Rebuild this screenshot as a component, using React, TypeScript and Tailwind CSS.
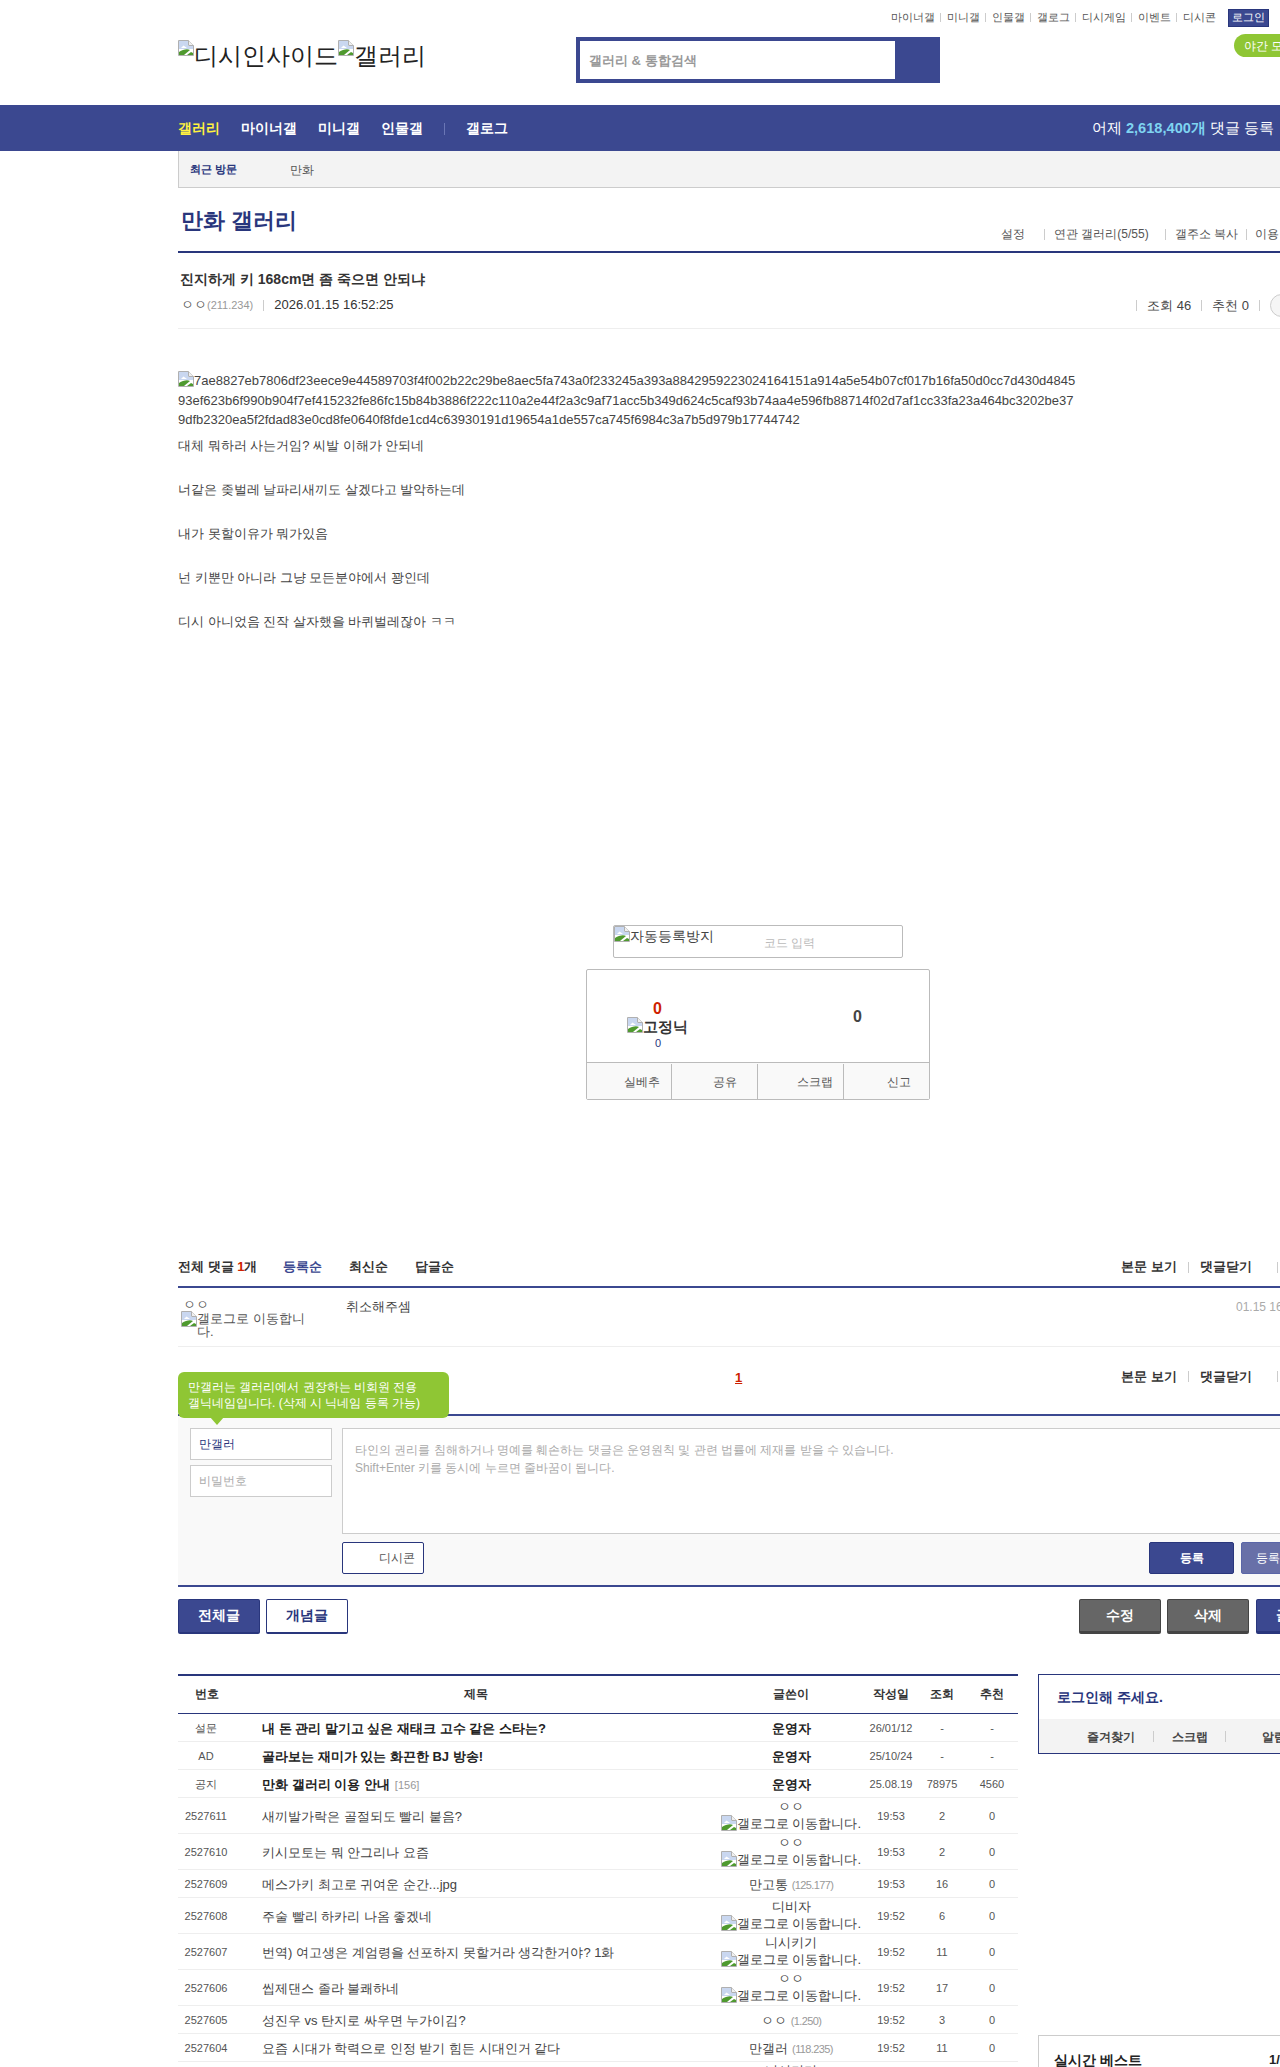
const FONT = "font-['Liberation_Sans',sans-serif]";

function BrokenImg() {
  return (
    <svg width="16" height="16" viewBox="0 0 16 16" className="inline-block align-top shrink-0">
      <path d="M0.5 0.5H10.5L15.5 5.5V15.5H0.5Z" fill="#fff" stroke="#b0b0b0" />
      <path d="M10.5 0.5V5.5H15.5" fill="#f0f0f0" stroke="#b0b0b0" />
      <path d="M1 1H10V5.5L11 6H15V9H1Z" fill="#c9d7f0" />
      <path d="M3 8l2.5-2.5L9 8Z" fill="#fff" />
      <path d="M1 15V12C5 9 10 8.5 12 10L6 15Z" fill="#4f9a2f" />
      <path d="M9 15l4-3 2 1v2Z" fill="#4f9a2f" />
    </svg>
  );
}

function Bar() {
  return <span className="inline-block h-[11px] w-px bg-[#ccc]" />;
}

const ROWS = [
  { num: "설문", title: "내 돈 관리 말기고 싶은 재태크 고수 같은 스타는?", bold: true, writer: "운영자", date: "26/01/12", view: "-", rec: "-", h: "h-[28px]" },
  { num: "AD", title: "골라보는 재미가 있는 화끈한 BJ 방송!", bold: true, writer: "운영자", date: "25/10/24", view: "-", rec: "-", h: "h-[28px]" },
  { num: "공지", title: "만화 갤러리 이용 안내", count: "[156]", bold: true, writer: "운영자", date: "25.08.19", view: "78975", rec: "4560", h: "h-[28px]" },
  { num: "2527611", title: "새끼발가락은 골절되도 빨리 붙음?", writer: "ㅇㅇ", icon: true, date: "19:53", view: "2", rec: "0", h: "h-[36px]" },
  { num: "2527610", title: "키시모토는 뭐 안그리나 요즘", writer: "ㅇㅇ", icon: true, date: "19:53", view: "2", rec: "0", h: "h-[36px]" },
  { num: "2527609", title: "메스가키 최고로 귀여운 순간...jpg", writer: "만고통", ip: "(125.177)", date: "19:53", view: "16", rec: "0", h: "h-[28px]" },
  { num: "2527608", title: "주술 빨리 하카리 나옴 좋겠네", writer: "디비자", icon: true, date: "19:52", view: "6", rec: "0", h: "h-[36px]" },
  { num: "2527607", title: "번역) 여고생은 계엄령을 선포하지 못할거라 생각한거야? 1화", writer: "니시키기", icon: true, date: "19:52", view: "11", rec: "0", h: "h-[36px]" },
  { num: "2527606", title: "씹제댄스 졸라 불쾌하네", writer: "ㅇㅇ", icon: true, date: "19:52", view: "17", rec: "0", h: "h-[36px]" },
  { num: "2527605", title: "성진우 vs 탄지로 싸우면 누가이김?", writer: "ㅇㅇ", ip: "(1.250)", date: "19:52", view: "3", rec: "0", h: "h-[28px]" },
  { num: "2527604", title: "요즘 시대가 학력으로 인정 받기 힘든 시대인거 같다", writer: "만갤러", ip: "(118.235)", date: "19:52", view: "11", rec: "0", h: "h-[28px]" },
  { num: "2527603", title: "", writer: "니시키기", icon: true, date: "", view: "", rec: "", h: "h-[36px]" },
];

const GRID = "grid grid-cols-[56px_484px_146px_54px_48px_52px] items-center text-center";

export default function App() {
  return (
    <div className={`${FONT} h-[2067px] w-[1280px] overflow-hidden bg-white text-[#333]`}>
      <header className="h-[105px] pl-[178px]">
        <div className="relative h-[105px] w-[1160px]">
          <div className="flex h-[37px] items-start justify-end pt-[9px] pr-[69px] text-[11px] text-[#555]">
            <div className="flex h-[18px] items-center gap-[5px] pb-[2px]">
              {["마이너갤", "미니갤", "인물갤", "갤로그", "디시게임", "이벤트", "디시콘"].map((t, i) => (
                <span key={t} className="flex items-center gap-[6px]">
                  {i > 0 && <span className="h-[9px] w-px bg-[#ccc]" />}
                  {t}
                </span>
              ))}
              <span className="ml-[7px] mb-[-2px] flex h-[18px] w-[41px] items-center justify-center border border-[#29367c] bg-[#3b4890] pb-[1px] text-white">로그인</span>
            </div>
          </div>
          <div className="flex items-start">
            <div className="flex w-[398px] items-start whitespace-nowrap pt-[3px] text-[24px] leading-[32px] text-[#222]">
              <BrokenImg />디시인사이드<BrokenImg />갤러리
            </div>
            <div className="flex h-[46px] w-[364px] border-4 border-[#3b4890] bg-[#3b4890]">
              <div className="flex w-[315px] items-center bg-white pl-[9px] pt-[1px] text-[13px] font-bold text-[#999]">갤러리 &amp; 통합검색</div>
            </div>
          </div>
          <div className="absolute left-[1056px] top-[34px] flex h-[23px] w-[104px] items-center rounded-l-full bg-[#8fc634] pl-[10px] pt-[1px] text-[12px] text-white">야간 모드</div>
        </div>
      </header>

      <nav className="flex h-[46px] bg-[#3b4890] pl-[178px] pt-[1px] text-white">
        <div className="flex w-[1102px] items-center justify-between">
          <div className="flex items-center text-[14px] font-bold">
            <span className="text-[#fff23f]">갤러리</span>
            <span className="ml-[21px]">마이너갤</span>
            <span className="ml-[21px]">미니갤</span>
            <span className="ml-[21px]">인물갤</span>
            <span className="ml-[21px] h-[12px] w-px bg-[#6a76b5]" />
            <span className="ml-[21px]">갤로그</span>
          </div>
          <div className="whitespace-nowrap pr-[6px] text-[14.6px]">
            어제 <b className="text-[#7fd4f0]">2,618,400개</b> 댓글 등록
          </div>
        </div>
      </nav>

      <div className="pl-[178px]">
        <div className="flex h-[37px] w-[1160px] items-center border-b border-l border-[#ccc] bg-[#f3f3f3] pl-[11px] pt-[1px] text-[12px]">
          <b className="w-[100px] text-[11px] text-[#29367c]">최근 방문</b>
          <span className="text-[#555]">만화</span>
        </div>

        <div className="flex h-[65px] w-[1160px] items-end justify-between border-b-2 border-[#29367c]">
          <h2 className="pb-[14px] pl-[3px] text-[22px] font-bold leading-[32px] text-[#29367c]">만화 갤러리</h2>
          <div className="flex items-center whitespace-nowrap pb-[8px] text-[12px] text-[#555]">
            <span>설정</span>
            <span className="ml-[19px] mr-[9px] flex items-center"><Bar /></span>
            <span>연관 갤러리(5/55)</span>
            <span className="ml-[16px] mr-[9px] flex items-center"><Bar /></span>
            <span>갤주소 복사</span>
            <span className="mx-[8px] flex items-center"><Bar /></span>
            <span className="w-[83px]">이용 안내</span>
          </div>
        </div>

        <div className="h-[76px] w-[1160px] border-b border-[#eee]">
          <h3 className="pl-[2px] pt-[16px] text-[14px] font-bold leading-[20px]">진지하게 키 168cm면 좀 죽으면 안되냐</h3>
          <div className="flex items-center justify-between">
            <div className="flex items-center pl-[3px] pt-[4px] text-[13px]">
              <span className="text-[13px] text-[#555]">ㅇㅇ</span>
              <span className="text-[11px] text-[#999]">(211.234)</span>
              <span className="mx-[10px] flex items-center"><Bar /></span>
              <span>2026.01.15 16:52:25</span>
            </div>
            <div className="flex items-center pr-[18px] pt-[5px] text-[13px] text-[#444]">
              <Bar />
              <span className="mx-[10px]">조회 46</span>
              <Bar />
              <span className="mx-[10px]">추천 0</span>
              <Bar />
              <span className="ml-[10px] h-[23px] w-[50px] rounded-full border border-[#ccc] bg-[#f5f5f5]" />
            </div>
          </div>
        </div>

        <div className="h-[596px] w-[900px] pt-[42px] text-[13px] leading-[19.5px] text-[#444]">
          <div className="break-all">
            <BrokenImg />7ae8827eb7806df23eece9e44589703f4f002b22c29be8aec5fa743a0f233245a393a8842959223024164151a914a5e54b07cf017b16fa50d0cc7d430d484593ef623b6f990b904f7ef415232fe86fc15b84b3886f222c110a2e44f2a3c9af71acc5b349d624c5caf93b74aa4e596fb88714f02d7af1cc33fa23a464bc3202be379dfb2320ea5f2fdad83e0cd8fe0640f8fde1cd4c63930191d19654a1de557ca745f6984c3a7b5d979b17744742
          </div>
          <div className="mt-[6px] flex flex-col gap-[24px] leading-[20px]">
            <p>대체 뭐하러 사는거임? 씨발 이해가 안되네</p>
            <p>너같은 좆벌레 날파리새끼도 살겠다고 발악하는데</p>
            <p>내가 못할이유가 뭐가있음</p>
            <p>넌 키뿐만 아니라 그냥 모든분야에서 꽝인데</p>
            <p>디시 아니었음 진작 살자했을 바퀴벌레잖아 ㅋㅋ</p>
          </div>
        </div>

        <div className="flex w-[1160px] flex-col items-center">
          <div className="relative h-[33px] w-[290px] rounded-[2px] border border-[#bbb]">
            <div className="flex items-start text-[14px] leading-[20px] text-[#444]"><BrokenImg />자동등록방지</div>
            <span className="absolute left-[150px] top-[8px] text-[12px] text-[#bbb]">코드 입력</span>
          </div>
          <div className="mt-[11px] w-[344px] rounded-[2px] border border-[#bbb]">
            <div className="relative h-[92px]">
              <b className="absolute left-[66px] top-[29px] text-[16px] leading-[20px] text-[#ce1f00]">0</b>
              <b className="absolute left-[40px] top-[47px] flex items-start text-[15px] leading-[20px]"><BrokenImg />고정닉</b>
              <span className="absolute left-[68px] top-[65px] text-[11px] text-[#29367c]">0</span>
              <b className="absolute left-[266px] top-[37px] text-[16px] leading-[20px] text-[#444]">0</b>
            </div>
            <div className="grid h-[37px] grid-cols-[84px_86px_86px_86px] border-t border-[#bbb] bg-[#f9f9f9] pt-[1px] text-[12px] text-[#555]">
              <span className="flex items-center justify-end pr-[11px]">실베추</span>
              <span className="flex items-center justify-end border-l border-[#bbb] pr-[20px]">공유</span>
              <span className="flex items-center justify-end border-l border-[#bbb] pr-[10px]">스크랩</span>
              <span className="flex items-center justify-end border-l border-[#bbb] pr-[18px]">신고</span>
            </div>
          </div>
        </div>

        <div className="mt-[157px] flex h-[31px] w-[1160px] items-start justify-between border-b-2 border-[#3b4890] text-[13px] font-bold leading-[20px]">
          <div className="flex">
            <span className="w-[105px]">전체 댓글 <span className="text-[#ce1f00]">1</span>개</span>
            <span className="w-[66px] text-[#3b4890]">등록순</span>
            <span className="w-[66px]">최신순</span>
            <span>답글순</span>
          </div>
          <div className="flex items-center pr-[60px]">
            <span>본문 보기</span>
            <span className="mx-[11px] flex items-center"><Bar /></span>
            <span>댓글닫기</span>
            <span className="ml-[25px] flex items-center"><Bar /></span>
          </div>
        </div>

        <div className="flex h-[59px] w-[1160px] border-b border-[#eee]">
          <div className="w-[168px] pl-[3px] pt-[10px] text-[13px] leading-[13px] text-[#555]">
            <div className="pl-[2px]">ㅇㅇ</div>
            <div className="relative w-[125px] pl-[16px] pt-[1px]">
              <span className="absolute left-0 top-0"><BrokenImg /></span>
              갤로그로 이동합니다.
            </div>
          </div>
          <div className="flex-1 pt-[10px] text-[13px] leading-[18px] text-[#444]">취소해주셈</div>
          <div className="w-[102px] pt-[10px] text-[12px] text-[#aaa]">01.15 16:52:25</div>
        </div>

        <div className="relative flex h-[69px] w-[1160px] items-center justify-end border-b-2 border-[#3b4890] pb-[8px] pr-[60px] text-[13px] font-bold">
          <span className="absolute left-[557px] top-[21px] text-[#ce1f00] underline">1</span>
          <div className="absolute left-0 top-[25px] w-[271px] rounded-[6px] bg-[#8fc634] px-[10px] py-[7px] text-[12px] font-normal leading-[16px] text-white">
            만갤러는 갤러리에서 권장하는 비회원 전용<br />갤닉네임입니다. (삭제 시 닉네임 등록 가능)
            <span className="absolute left-[32px] top-[45px] h-0 w-0 border-x-[7px] border-t-[8px] border-x-transparent border-t-[#8fc634]" />
          </div>
          <span>본문 보기</span>
          <span className="mx-[11px] flex items-center"><Bar /></span>
          <span>댓글닫기</span>
          <span className="ml-[25px] flex items-center"><Bar /></span>
        </div>

        <div className="h-[171px] w-[1160px] border-b-2 border-[#3b4890] bg-[#f9f9f9] pt-[12px]">
          <div className="flex">
            <div className="ml-[12px] flex w-[142px] flex-col gap-[5px] text-[12px]">
              <div className="flex h-[32px] items-center border border-[#ccc] bg-white pl-[8px] text-[#29367c]">만갤러</div>
              <div className="flex h-[32px] items-center border border-[#ccc] bg-white pl-[8px] text-[#aaa]">비밀번호</div>
            </div>
            <div className="ml-[10px] flex-1">
              <div className="h-[106px] border border-[#ccc] bg-white pl-[12px] pt-[12px] text-[12px] leading-[18px] text-[#aaa]">
                타인의 권리를 침해하거나 명예를 훼손하는 댓글은 운영원칙 및 관련 법률에 제재를 받을 수 있습니다.<br />
                Shift+Enter 키를 동시에 누르면 줄바꿈이 됩니다.
              </div>
              <div className="mt-[8px] flex items-start justify-between">
                <div className="flex h-[32px] w-[82px] items-center rounded-[2px] border border-[#29367c] bg-white pl-[36px] text-[12px] text-[#555]">디시콘</div>
                <div className="mr-[12px] flex gap-[7px] text-[12px] font-bold text-white">
                  <div className="flex h-[32px] w-[85px] items-center justify-center rounded-[2px] border border-[#29367c] bg-[#3b4890]">등록</div>
                  <div className="flex h-[32px] w-[85px] items-center justify-center rounded-[2px] border border-[#5a66a8] bg-[#6870a8] font-normal">등록+추천</div>
                </div>
              </div>
            </div>
          </div>
        </div>

        <div className="mt-[12px] flex w-[1160px] justify-between text-[14px] font-bold">
          <div className="flex gap-[6px]">
            <div className="flex h-[35px] w-[82px] items-center justify-center rounded-[2px] border border-b-[2px] border-[#29367c] bg-[#3b4890] pb-[1px] text-white">전체글</div>
            <div className="flex h-[35px] w-[82px] items-center justify-center rounded-[2px] border border-b-[2px] border-[#29367c] bg-white pb-[1px] text-[#29367c]">개념글</div>
          </div>
          <div className="flex">
            <div className="flex h-[35px] w-[82px] items-center justify-center rounded-[2px] border border-b-[3px] border-[#444] bg-[#666] text-white">수정</div>
            <div className="ml-[6px] flex h-[35px] w-[82px] items-center justify-center rounded-[2px] border border-b-[3px] border-[#444] bg-[#666] text-white">삭제</div>
            <div className="ml-[7px] flex h-[35px] w-[82px] items-center justify-center rounded-[2px] border border-b-[3px] border-[#29367c] bg-[#3b4890] text-white">글쓰기</div>
          </div>
        </div>

        <div className="mt-[40px] flex w-[1160px] items-start gap-[20px]">
          <div className="w-[840px]">
            <div className={`${GRID} h-[40px] border-b border-t-2 border-b-[#29367c] border-t-[#29367c] pb-[2px] text-[12px] font-bold`}>
              <span className="pl-[2px]">번호</span>
              <span>제목</span>
              <span>글쓴이</span>
              <span>작성일</span>
              <span>조회</span>
              <span>추천</span>
            </div>
            {ROWS.map((r) => (
              <div key={r.num} className={`${GRID} ${r.h} border-b border-[#eee] pt-[2px] text-[11px] text-[#555]`}>
                <span>{r.num}</span>
                <span className={`pl-[28px] text-left text-[13px] ${r.bold ? "font-bold text-[#222]" : "text-[#444]"}`}>
                  {r.title}
                  {r.count && <span className="ml-[5px] text-[11px] font-normal text-[#999]">{r.count}</span>}
                </span>
                <span className={`whitespace-nowrap text-[13px] leading-[17px] ${r.bold ? "font-bold text-[#222]" : "text-[#444]"} ${r.icon ? "-mt-[4px]" : ""}`}>
                  {r.writer}
                  {r.ip && <span className="ml-[4px] text-[11px] tracking-[-0.6px] text-[#999]">{r.ip}</span>}
                  {r.icon && (
                    <span className="flex items-start justify-center">
                      <BrokenImg />갤로그로 이동합니다.
                    </span>
                  )}
                </span>
                <span>{r.date}</span>
                <span>{r.view}</span>
                <span>{r.rec}</span>
              </div>
            ))}
          </div>

          <aside className="w-[300px]">
            <div className="h-[80px] border border-[#29367c]">
              <div className="flex h-[44px] items-center pl-[18px] pt-[1px] text-[14px] font-bold text-[#29367c]">로그인해 주세요.</div>
              <div className="flex h-[34px] items-center bg-[#f3f3f3] pl-[48px] pt-[1px] text-[12px] font-bold text-[#444]">
                <span>즐겨찾기</span>
                <span className="mx-[18px] flex items-center"><Bar /></span>
                <span>스크랩</span>
                <span className="mx-[17px] flex items-center"><Bar /></span>
                <span className="ml-[19px]">알림</span>
              </div>
            </div>
            <div className="mt-[281px] h-[120px] border border-[#ccc] pl-[15px] pt-[14px]">
              <div className="flex text-[14px] font-bold text-[#222]">
                <span className="w-[215px]">실시간 베스트</span>
                <span className="text-[13px]">1/5</span>
              </div>
            </div>
          </aside>
        </div>
      </div>
    </div>
  );
}
